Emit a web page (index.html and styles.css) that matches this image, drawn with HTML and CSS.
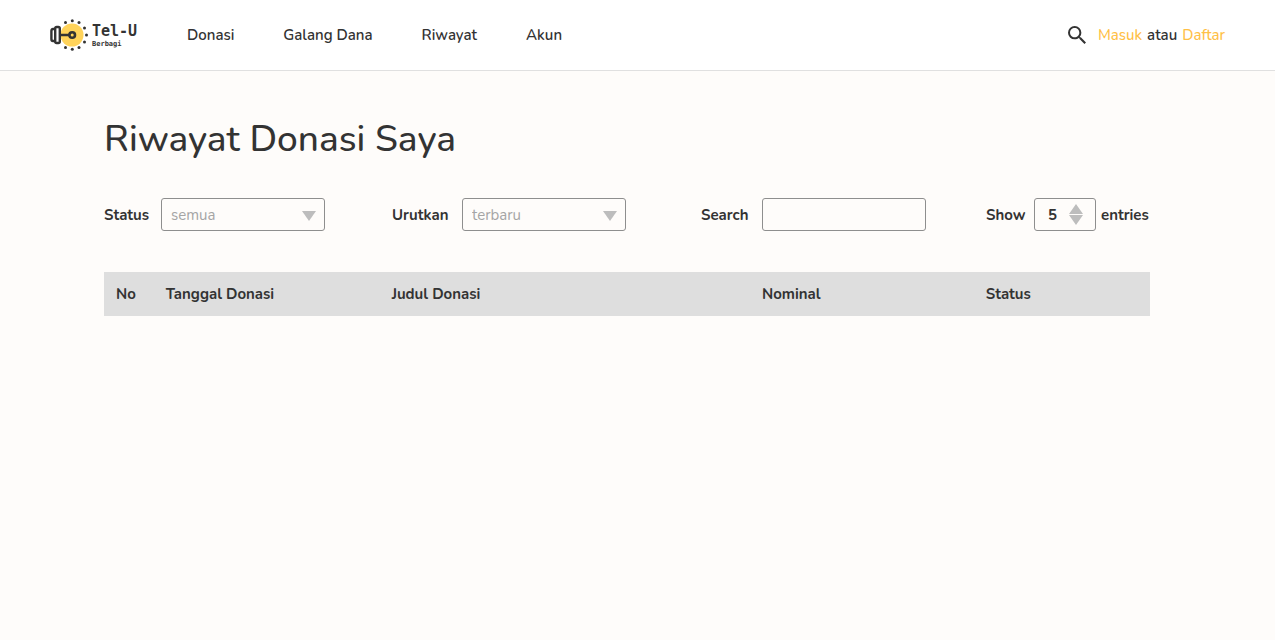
FILE: index.html
```html
<!DOCTYPE html>
<html lang="id">
<head>
  <meta charset="utf-8">
  <meta name="viewport" content="width=device-width, initial-scale=1">
  <title>Riwayat Donasi Saya</title>
  <link rel="stylesheet" href="styles.css">
</head>
<body>
  <header class="topbar">
    <a class="brand" href="#">
      <svg class="brand-icon" width="40" height="34" viewBox="0 0 40 34" aria-hidden="true">
        <circle cx="22" cy="17" r="11.5" fill="#ffd35a"/>
        <g fill="none" stroke="#333" stroke-width="2.4" stroke-linejoin="round">
          <rect x="5.2" y="9" width="4.6" height="16" rx="1.5"/>
          <path d="M5 11H3Q1.4 11 1.4 13V21Q1.4 23 3 23H5M10 17H19" />
          <circle cx="22.2" cy="17" r="2.8" stroke-width="2.6"/>
        </g>
        <g fill="#333">
          <circle cx="15.5" cy="4.5" r="1.5"/>
          <circle cx="22.3" cy="2.7" r="1.5"/>
          <circle cx="29" cy="4.5" r="1.5"/>
          <circle cx="34.5" cy="10" r="1.5"/>
          <circle cx="36.5" cy="17" r="1.5"/>
          <circle cx="34.5" cy="24" r="1.5"/>
          <circle cx="29" cy="29.5" r="1.5"/>
          <circle cx="22.3" cy="31.3" r="1.5"/>
          <circle cx="15.5" cy="29.5" r="1.5"/>
        </g>
      </svg>
      <span class="brand-text">
        <span class="brand-name">Tel-U</span>
        <span class="brand-sub">Berbagi</span>
      </span>
    </a>
    <nav class="menu">
      <a href="#">Donasi</a>
      <a href="#">Galang Dana</a>
      <a href="#">Riwayat</a>
      <a href="#">Akun</a>
    </nav>
    <div class="account">
      <button class="search-button" type="button" aria-label="Search">
        <svg width="18" height="18" viewBox="3 3 17.5 17.5" aria-hidden="true">
          <path fill="#333" d="M15.5 14h-.79l-.28-.27A6.47 6.47 0 0 0 16 9.5 6.5 6.5 0 1 0 9.5 16c1.61 0 3.09-.59 4.23-1.57l.27.28v.79l5 4.99L20.49 19l-4.99-5zm-6 0C7.01 14 5 11.99 5 9.5S7.01 5 9.5 5 14 7.01 14 9.5 11.99 14 9.5 14z"/>
        </svg>
      </button>
      <div class="account-links">
        <a class="accent" href="#">Masuk</a>
        <span>atau</span>
        <a class="accent" href="#">Daftar</a>
      </div>
    </div>
  </header>

  <main class="content">
    <h1 class="title">Riwayat Donasi Saya</h1>

    <form class="filters">
      <div class="filter">
        <label class="label-status" for="status">Status</label>
        <div class="field">
          <select id="status"><option>semua</option></select>
          <svg class="arrow" width="14" height="10" viewBox="0 0 14 10" aria-hidden="true"><path fill="#bdbdbd" d="M0 0H14L7 10Z"/></svg>
        </div>
      </div>
      <div class="filter">
        <label class="label-sort" for="sort">Urutkan</label>
        <div class="field">
          <select id="sort"><option>terbaru</option></select>
          <svg class="arrow" width="14" height="10" viewBox="0 0 14 10" aria-hidden="true"><path fill="#bdbdbd" d="M0 0H14L7 10Z"/></svg>
        </div>
      </div>
      <div class="filter">
        <label class="label-search" for="search">Search</label>
        <div class="field"><input id="search" type="text"></div>
      </div>
      <div class="filter">
        <label class="label-show" for="entries">Show</label>
        <div class="field field-small">
          <input id="entries" type="number" value="5">
          <svg class="stepper" width="14" height="21" viewBox="0 0 14 21" aria-hidden="true"><path fill="#bdbdbd" d="M0 10H14L7 0ZM0 11H14L7 21Z"/></svg>
        </div>
        <span class="after">entries</span>
      </div>
    </form>

    <table class="history">
      <thead>
        <tr>
          <th class="col-no">No</th>
          <th class="col-date">Tanggal Donasi</th>
          <th class="col-title">Judul Donasi</th>
          <th class="col-amount">Nominal</th>
          <th class="col-status">Status</th>
        </tr>
      </thead>
      <tbody></tbody>
    </table>
  </main>
</body>
</html>
```

FILE: styles.css
```css
* {
  box-sizing: border-box;
}

body {
  margin: 0;
  background: #fefcfa;
  color: #333;
  font: 15px/20px Nunito, "Open Sans", sans-serif;
}

a {
  color: inherit;
  text-decoration: none;
}

.topbar {
  display: flex;
  align-items: center;
  padding: 18px 50px;
  background: #fff;
  border-bottom: 1px solid #e0e0e0;
}

.brand {
  display: flex;
  align-items: center;
  width: 137px;
}

.brand-text {
  display: flex;
  flex-direction: column;
  margin-left: 2px;
  font-family: "DejaVu Sans Mono", monospace;
}

.brand-name {
  font-size: 15px;
  font-weight: bold;
  line-height: 17px;
}

.brand-sub {
  font-size: 7px;
  font-weight: bold;
  line-height: 8px;
}

.menu {
  display: flex;
  gap: 49px;
  font-weight: 600;
}

.account {
  display: flex;
  align-items: center;
  gap: 12px;
  margin-left: auto;
  font-weight: 600;
}

.account-links {
  display: flex;
  gap: 5px;
}

.search-button {
  display: flex;
  padding: 0;
  border: 0;
  background: none;
}

.accent {
  color: #ffc046;
  font-weight: 500;
}

.content {
  padding: 44px 125px 43px 104px;
}

.title {
  margin: 0 0 35px;
  font-size: 37px;
  font-weight: 500;
  line-height: 48px;
}

.filters {
  display: grid;
  grid-template-columns: 288fr 309fr 285fr 164fr;
  margin-bottom: 41px;
  font-weight: 700;
}

.filter {
  display: flex;
  align-items: center;
  white-space: nowrap;
}

.label-status {
  width: 57px;
}

.label-sort {
  width: 70px;
}

.label-search {
  width: 61px;
}

.label-show {
  width: 48px;
}

.field {
  position: relative;
  width: 164px;
}

.field-small {
  width: 62px;
}

.field select,
.field input {
  display: block;
  width: 100%;
  height: 33px;
  padding: 0 9px;
  border: 1px solid #8e8e8e;
  border-radius: 3px;
  background: transparent;
  color: #a5a5a5;
  font: inherit;
  font-weight: 400;
  appearance: none;
}

.field-small input {
  padding: 0 13px;
  color: #333;
  font-weight: 700;
  appearance: textfield;
}

.field-small input::-webkit-inner-spin-button {
  display: none;
}

.arrow {
  position: absolute;
  top: 13px;
  right: 9px;
  pointer-events: none;
}

.stepper {
  position: absolute;
  top: 6px;
  right: 13px;
  pointer-events: none;
}

.after {
  margin-left: 5px;
}

.history {
  width: 100%;
  border-collapse: collapse;
  table-layout: fixed;
  background: #dedede;
}

.history th {
  padding: 12px 0;
  font-weight: 700;
  text-align: left;
}

.history .col-no {
  width: 5.9%;
  padding-left: 12px;
}

.col-date {
  width: 21.6%;
}

.col-title {
  width: 35.4%;
}

.col-amount {
  width: 21.4%;
}
```
